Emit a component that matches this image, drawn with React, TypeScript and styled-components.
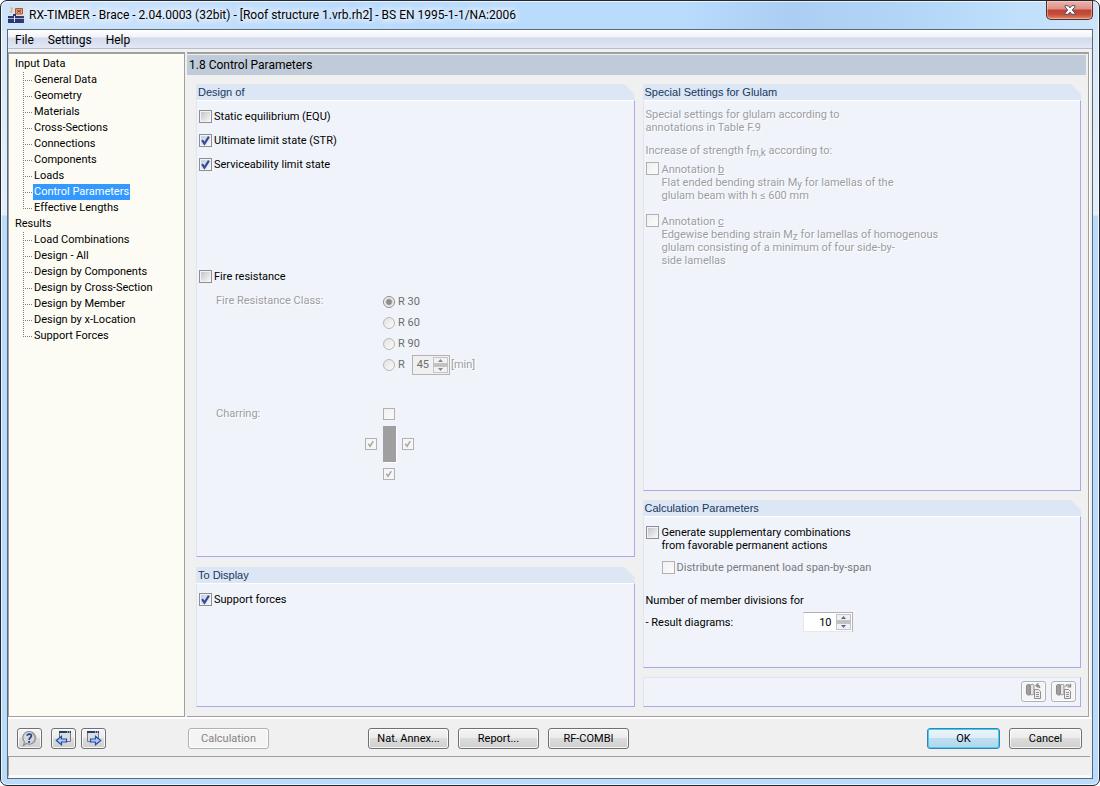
import React from 'react';
import styled, { createGlobalStyle, css } from 'styled-components';

const UI_FONT = 'Roboto, Tahoma, sans-serif';

const GlobalStyle = createGlobalStyle`
  * { box-sizing: border-box; }
  body { margin: 0; background: #fff; }
  button, input { font: inherit; color: inherit; margin: 0; }
`;

/* ---------- window frame ---------- */

const Window = styled.div`
  display: flex;
  flex-direction: column;
  min-height: 100vh;
  padding: 0 6px 6px;
  border: 1px solid #23272e;
  border-radius: 7px;
  background:
    linear-gradient(90deg, #cfe4fa 0, #cfe4fa 3%, #b9dbfc 30%, #b9dbfc 62%, #abcef2 72%, #b4d7f8 84%, #bfdffb 92%, #cde4fa 100%) top / 100% 29px no-repeat,
    linear-gradient(#d6e8fa 0, #e4effa 214px, #b9dbfc 215px, #b9dbfc 100%);
  box-shadow: inset 0 0 0 1px rgba(255, 255, 255, 0.7);
  font: 11px/13px ${UI_FONT};
  color: #000;
`;

const TitleBar = styled.header`
  display: flex;
  align-items: flex-start;
  height: 28px;
`;

const Title = styled.h1`
  flex: 1;
  margin: 0;
  padding: 6px 0 0 5px;
  font-size: 12px;
  line-height: 16px;
  font-weight: 400;
  white-space: nowrap;
  text-shadow: 0 0 6px #fff, 0 0 10px #fff, 0 0 12px #fff;
`;

const AppIcon = styled.svg`
  width: 16px;
  height: 16px;
  margin: 6px 0 0 1px;
`;

const CloseButton = styled.button`
  display: flex;
  align-items: center;
  justify-content: center;
  width: 47px;
  height: 19px;
  padding: 0;
  border: 1px solid #5b2a2a;
  border-top: 0;
  border-radius: 0 0 5px 5px;
  background: linear-gradient(#eeb3ac 0, #dc8f86 45%, #bd4231 50%, #c5503a 75%, #dc8a68 100%);
  box-shadow: inset 0 0 0 1px rgba(255, 225, 215, 0.45);
`;

const Client = styled.div`
  flex: 1;
  display: flex;
  flex-direction: column;
  border: 1px solid #5c6a78;
  background: #f0f0f0;
`;

const MenuBar = styled.nav`
  display: flex;
  gap: 14px;
  height: 19px;
  margin-bottom: 3px;
  padding-left: 7px;
  border-bottom: 1px solid #b6bccc;
  background: linear-gradient(#fff 0, #f1f3f9 7px, #d3daec 8px, #e3e8f5 100%);
`;

const MenuItem = styled.button`
  padding: 1px 0 0;
  border: 0;
  background: none;
  font-size: 12px;
  line-height: 18px;
`;

/* ---------- body ---------- */

const Body = styled.div`
  flex: 1;
  display: grid;
  grid-template-columns: 177px minmax(0, 1fr);
  column-gap: 2px;
  border-bottom: 2px solid #fff;
`;

const Sidebar = styled.nav`
  padding: 2px 0 0 6px;
  border: 1px solid #a0a0a0;
  border-top: 2px solid #a0a0a0;
  background: #fcfcf4;
  box-shadow: inset 0 1px 0 #fff;
`;

const TreeList = styled.ul`
  margin: 0;
  padding: 0;
  list-style: none;
  line-height: 16px;
  white-space: nowrap;
`;

const SubList = styled(TreeList)`
  padding-left: 8px;
`;

const TreeRow = styled.li`
  display: flex;
  height: 16px;
`;

const Branch = styled.span<{ $last: boolean }>`
  width: 10px;
  height: 16px;
  background: linear-gradient(90deg, #808080 1px, transparent 1px) 0 8px / 2px 1px repeat-x;

  &::before {
    content: '';
    display: block;
    width: 1px;
    height: ${(p) => (p.$last ? '8px' : '16px')};
    background: linear-gradient(#808080 1px, transparent 1px) 0 0 / 1px 2px;
  }
`;

const TreeLink = styled.a<{ $active?: boolean }>`
  padding: 0 1px;
  color: ${(p) => (p.$active ? '#fff' : '#000')};
  background: ${(p) => (p.$active ? '#3399ff' : 'transparent')};
  text-decoration: none;
`;

const Content = styled.main`
  display: flex;
  flex-direction: column;
  margin-right: 3px;
  border: 1px solid #a0a0a0;
  border-top-width: 2px;
  border-left: 0;
  padding: 1px 2px 9px 0;
  box-shadow: 1px 0 0 #fff;
`;

const PageTitle = styled.h2`
  margin: 0;
  padding-left: 2px;
  background: #bfcbd8;
  font-size: 12px;
  line-height: 20px;
  font-weight: 400;
`;

const Columns = styled.div`
  flex: 1;
  display: grid;
  grid-template-columns: repeat(2, minmax(0, 1fr));
  column-gap: 8px;
  padding: 9px 5px 0 9px;
`;

const Column = styled.div<{ $gap: number }>`
  display: flex;
  flex-direction: column;
  gap: ${(p) => p.$gap}px;
`;

/* ---------- panels ---------- */

const PanelBox = styled.section<{ $grow?: boolean; $height?: number }>`
  display: flex;
  flex-direction: column;
  flex: ${(p) => (p.$grow ? '1' : '0 0 auto')};
  min-height: ${(p) => p.$height ?? 0}px;
`;

const PanelTitle = styled.h3`
  height: 16px;
  margin: 0;
  padding-left: 2px;
  background: #dce6f5;
  clip-path: polygon(0 0, calc(100% - 10px) 0, 100% 10px, 100% 100%, 0 100%);
  font: 400 11px/16px "Liberation Sans", Arial, sans-serif;
  color: #17375e;
`;

const PanelBody = styled.div<{ $titled?: boolean }>`
  flex: 1;
  border: 1px solid #a8a8ee;
  border-left-color: #dbe5f6;
  border-top: 1px solid ${(p) => (p.$titled ? '#fff' : '#dbe5f6')};
  background: #f0f4fa;
  padding: 0 4px 0 2px;
`;

/* ---------- controls ---------- */

const disabledText = css`
  color: #9c9da3;
  text-shadow: 1px 1px 0 #fff;
`;

const Tick = styled.input.attrs({ type: 'checkbox' })<{ $size?: number }>`
  appearance: none;
  flex: none;
  width: ${(p) => p.$size ?? 13}px;
  height: ${(p) => p.$size ?? 13}px;
  border: 1px solid #8e8f8f;
  background: linear-gradient(135deg, #c2c5ca, #f6f6f6) content-box #f4f4f4;
  padding: 1px;

  &:checked {
    background:
      url("data:image/svg+xml,%3Csvg xmlns='http://www.w3.org/2000/svg' viewBox='0 0 11 11'%3E%3Cpath d='M2.6 5.2 4.6 8.2 8.4 2.2' fill='none' stroke='%2334489c' stroke-width='1.8'/%3E%3C/svg%3E") center / 100% 100% no-repeat border-box,
      linear-gradient(135deg, #c9cdd8, #f6f6f6) content-box #f4f4f4;
  }

  &:disabled {
    border-color: #b1b1b1;
    background: linear-gradient(135deg, #f0f0f0, #fbfbfb);
  }

  &:disabled:checked {
    background:
      url("data:image/svg+xml,%3Csvg xmlns='http://www.w3.org/2000/svg' viewBox='0 0 11 11'%3E%3Cpath d='M2.5 5.2 4.5 8 8 2.4' fill='none' stroke='%23acacac' stroke-width='1.8'/%3E%3C/svg%3E") center / 100% 100% no-repeat,
      #f6f6f6;
  }
`;

const CheckRow = styled.label<{ $top?: number; $indent?: number }>`
  display: flex;
  align-items: center;
  gap: 2px;
  height: 24px;
  margin-top: ${(p) => p.$top ?? 0}px;
  margin-left: ${(p) => p.$indent ?? 0}px;
`;

const CheckList = styled.div`
  padding-top: 3px;
`;

const OptionGroup = styled.fieldset<{ $top: number }>`
  display: grid;
  grid-template-columns: 167px 1fr;
  margin: ${(p) => p.$top}px 0 0;
  padding: 0 0 0 17px;
  border: 0;
`;

const GroupName = styled.span<{ $row: number }>`
  line-height: ${(p) => p.$row}px;
  ${disabledText}
`;

const RadioRow = styled.div`
  display: flex;
  align-items: center;
  height: 21px;
  color: #6d6d6d;
`;

const RadioLabel = styled.label`
  display: flex;
  align-items: center;
  gap: 3px;
`;

const Radio = styled.input.attrs({ type: 'radio' })`
  appearance: none;
  width: 12px;
  height: 12px;
  border: 1px solid #b8b8b8;
  border-radius: 50%;
  background: linear-gradient(135deg, #e2e2e2, #fbfbfb);

  &:checked {
    border-color: #8c8c8c;
    background: radial-gradient(circle, #8f8f8f 0, #8a8a8a 2px, #b4b4b4 3px, #f2f2f2 4px);
  }
`;

const Spinner = styled.span<{ $wide?: boolean; $off?: boolean }>`
  display: flex;
  width: ${(p) => (p.$wide ? 50 : 38)}px;
  height: 20px;
  padding: 1px;
  border: 1px solid #b2b2b2;
  background: ${(p) => (p.$off ? '#f0f0f0' : '#fff')};
  ${(p) => p.$wide && 'border-left-color: #e3e9ef; border-bottom-color: #e3e9ef;'}
`;

const SpinField = styled.input`
  flex: 1;
  min-width: 0;
  padding: 0 4px 0 0;
  border: 0;
  background: none;
  text-align: right;

  &:disabled { color: #6d6d6d; }
`;

const SpinButtons = styled.span`
  display: grid;
  grid-template-rows: 1fr 1fr;
  width: 15px;
  row-gap: 2px;
  background: #c0c0c0;
`;

const SpinButton = styled.button`
  display: flex;
  align-items: center;
  justify-content: center;
  padding: 0;
  border: 1px solid #c4c4c4;
  background: #f1f1f3;
  color: #5b6497;

  &:disabled { color: #8a8a8a; }
`;

const MinuteRow = styled(RadioRow)`
  ${RadioLabel} { width: 29px; }
`;

const Unit = styled.span`
  padding-left: 1px;
  ${disabledText}
`;

const Charring = styled.div`
  display: grid;
  grid-template-columns: 12px 13px 12px;
  grid-template-rows: 12px 36px 12px;
  grid-template-areas: '. top .' 'left bar right' '. bottom .';
  gap: 6px;
  align-items: center;
  margin-left: -18px;
`;

const CharTick = styled(Tick)<{ $side: string }>`
  grid-area: ${(p) => p.$side};
`;

const Beam = styled.span`
  grid-area: bar;
  height: 36px;
  background: #9f9f9f;
  box-shadow: 1px 1px 0 #fff;
`;

const Note = styled.p<{ $top: number }>`
  margin: ${(p) => p.$top}px 0 0;
  ${disabledText}
`;

const Annotation = styled.label<{ $top: number }>`
  display: grid;
  grid-template-columns: 13px 1fr;
  column-gap: 3px;
  margin-top: ${(p) => p.$top}px;
  ${disabledText}
`;

const AnnotationText = styled.span`
  padding-top: 1px;
`;

const Sub = styled.sub`
  font-size: 10px;
  line-height: 0;
  vertical-align: -2px;
`;

const Multiline = styled.label`
  display: flex;
  align-items: flex-start;
  gap: 3px;
  padding-top: 9px;
`;

const SubCheck = styled(CheckRow)`
  color: #77797f;
`;

const Line = styled.p<{ $top: number }>`
  margin: ${(p) => p.$top}px 0 0;
`;

const FieldRow = styled.div`
  display: grid;
  grid-template-columns: 157px auto;
  align-items: center;
  margin-top: 5px;
`;

const ToolRow = styled.div`
  display: flex;
  justify-content: flex-end;
  gap: 5px;
  padding-top: 3px;
`;

/* ---------- footer ---------- */

const Button = styled.button<{ $width?: number; $primary?: boolean }>`
  display: flex;
  align-items: center;
  justify-content: center;
  width: ${(p) => p.$width ?? 81}px;
  height: 21px;
  padding: 0;
  border: 1px solid #707070;
  border-radius: 3px;
  background: linear-gradient(#f4f4f4 0, #ebebeb 49%, #dcdcdc 50%, #cfcfcf 100%);
  box-shadow: inset 0 0 0 1px rgba(255, 255, 255, 0.8);

  ${(p) => p.$primary && css`
    border-color: #3c7fb1;
    background: linear-gradient(#ecf5fb 0, #dbedf8 49%, #c0def0 50%, #b3d6ec 100%);
    box-shadow: inset 0 0 0 1px #3fd0f8;
  `}

  &:disabled {
    border-color: #adb2b5;
    background: #f4f4f4;
    color: #838383;
  }
`;

const Footer = styled.footer`
  display: grid;
  grid-template-columns: 171px 180px 1fr auto;
  align-items: center;
  padding: 9px 10px 7px 9px;
`;

const ButtonGroup = styled.div<{ $gap: number }>`
  display: flex;
  gap: ${(p) => p.$gap}px;
`;

const HelpButton = styled(Button)`
  margin-right: 4px;
`;

const StatusBar = styled.div`
  height: 22px;
  margin-right: 2px;
  border-top: 1px solid #a0a0a0;
  border-left: 1px solid #a0a0a0;
  border-bottom: 3px solid #fafafa;
`;

/* ---------- icons ---------- */

const HelpIcon = () => (
  <svg width="17" height="17" viewBox="0 0 17 17" aria-hidden="true">
    <path d="M8.5 1.500a6.300 6.300 0 1 1-3 11.900L2.500 15.500 3.500 12A6.300 6.300 0 0 1 8.500 1.500Z" fill="#d5d8de" stroke="#858992" strokeWidth="1.100" />
    <path d="M10.500 2.500a6 6 0 0 1 1 10.500" fill="none" stroke="#9a9da5" strokeWidth="1.400" />
    <path d="M6.200 5.800C6.200 3.600 10.400 3.400 10.400 5.800 10.400 7.600 8.300 7.600 8.100 9.800" fill="none" stroke="#2c4480" strokeWidth="1.800" />
    <path d="M7.100 11h2v1.800h-2z" fill="#2c4480" />
  </svg>
);

const PageIcon = ({ forward }: { forward?: boolean }) => (
  <svg width="17" height="17" viewBox="0 0 17 17" aria-hidden="true">
    <g transform={forward ? 'translate(-1 0)' : 'translate(1 0)'}>
      <path d="M3.500 1.500h11v10h-11z" fill="#dcdde0" stroke="#777a82" />
      <path d="M3 1h12v2H3z" fill="#2b3d70" />
      <path d="M11 1.500h1v1h-1zM13 1.500h1v1h-1z" fill="#fff" />
    </g>
    <path
      d={forward ? 'M5.500 9h5V6.200l5.200 4.300-5.200 4.300V12h-5z' : 'M11.500 9h-5V6.200l-5.200 4.300 5.200 4.300V12h5z'}
      fill="#a9d2f7"
      stroke="#2a4aa3"
      strokeWidth="1.200"
    />
  </svg>
);

const LibraryIcon = ({ load }: { load?: boolean }) => (
  <svg width="17" height="17" viewBox="0 0 17 17" aria-hidden="true">
    <path d="M1.500 2.500v8.500c.8 1 2.300 1.200 3.500.8V1.800C3.800 1.200 2.300 1.500 1.500 2.500Z" fill="#a0a0a0" stroke="#8a8a8a" />
    <path d="M5.500 1.800c1.500-.6 2.800-.4 3.500.5v8.500c-.8.900-2 1.200-3.500.9z" fill="#e6e6e6" stroke="#8f8f8f" />
    <path d="M9.500 6.500h4l2 2v7h-6z" fill="#eee" stroke="#8f8f8f" />
    <path d="M11 9.500h3M11 11.500h3M11 13.500h3" stroke="#8f8f8f" />
    <path
      d={load ? 'M10.500 3.500c1-1.800 2.500-2 4-.8M15.500.800v3h-3' : 'M14.500 5c.4-2-.5-2.700-2.500-2.700M13.500.400l-2.500 2 2.500 2.200'}
      fill="none"
      stroke="#8a8a8a"
      strokeWidth="1.300"
    />
  </svg>
);

const Arrow = ({ down }: { down?: boolean }) => (
  <svg width="5" height="3" viewBox="0 0 5 3" aria-hidden="true">
    <path d={down ? 'M0 0h5L2.500 3z' : 'M0 3h5L2.500 0z'} fill="currentColor" />
  </svg>
);

const Spin = ({ id, value, wide, off, label }: { id: string; value: string; wide?: boolean; off?: boolean; label?: string }) => (
  <Spinner $wide={wide} $off={off}>
    <SpinField id={id} defaultValue={value} disabled={off} aria-label={label} />
    <SpinButtons>
      <SpinButton disabled={off} aria-label="Increase"><Arrow /></SpinButton>
      <SpinButton disabled={off} aria-label="Decrease"><Arrow down /></SpinButton>
    </SpinButtons>
  </Spinner>
);

const Panel = ({ title, grow, height, children }: { title?: string; grow?: boolean; height?: number; children: React.ReactNode }) => (
  <PanelBox $grow={grow} $height={height}>
    {title && <PanelTitle>{title}</PanelTitle>}
    <PanelBody $titled={!!title}>{children}</PanelBody>
  </PanelBox>
);

const TREE = [
  {
    name: 'Input Data',
    items: ['General Data', 'Geometry', 'Materials', 'Cross-Sections', 'Connections', 'Components', 'Loads', 'Control Parameters', 'Effective Lengths'],
  },
  {
    name: 'Results',
    items: ['Load Combinations', 'Design - All', 'Design by Components', 'Design by Cross-Section', 'Design by Member', 'Design by x-Location', 'Support Forces'],
  },
];

const CLASSES = ['R 30', 'R 60', 'R 90'];

export default function App() {
  return (
    <>
      <GlobalStyle />
      <Window>
        <TitleBar>
          <AppIcon viewBox="0 0 16 16" aria-hidden="true">
            <path d="M6.500 0H16v9H6.500z" fill="#f3dcc8" />
            <path d="M7.500 1.500h7v5.500h-7z" fill="#d9a27e" stroke="#a3564a" />
            <path d="M9 3l4 2.500M13 3L9 5.500" stroke="#7a4040" />
            <path d="M2 1h2v2L2.500 5H4.500" fill="none" stroke="#e8ae62" strokeWidth="1.200" />
            <path d="M0 9h5V7h3v2h8v7H0z" fill="#2b3870" />
            <path d="M0 11.500h16" stroke="#a9b4d4" />
            <path d="M6.500 9v6" stroke="#dfe6f5" />
          </AppIcon>
          <Title>RX-TIMBER - Brace - 2.04.0003 (32bit) - [Roof structure 1.vrb.rh2] - BS EN 1995-1-1/NA:2006</Title>
          <CloseButton aria-label="Close">
            <svg width="12" height="10" viewBox="0 0 12 10" aria-hidden="true">
              <path d="M1 .7h3.200L6 2.900 7.800.7H11v1.100L8.300 5 11 8.200v1.100H7.800L6 7.100 4.200 9.300H1V8.200L3.700 5 1 1.800z" fill="#fff" stroke="#4b5366" />
            </svg>
          </CloseButton>
        </TitleBar>

        <Client>
          <MenuBar>
            <MenuItem>File</MenuItem>
            <MenuItem>Settings</MenuItem>
            <MenuItem>Help</MenuItem>
          </MenuBar>

          <Body>
            <Sidebar>
              <TreeList>
                {TREE.map((group) => (
                  <li key={group.name}>
                    {group.name}
                    <SubList>
                      {group.items.map((item, i) => (
                        <TreeRow key={item}>
                          <Branch $last={i === group.items.length - 1} />
                          <TreeLink href="#" $active={item === 'Control Parameters'}>{item}</TreeLink>
                        </TreeRow>
                      ))}
                    </SubList>
                  </li>
                ))}
              </TreeList>
            </Sidebar>

            <Content>
              <PageTitle>1.8 Control Parameters</PageTitle>
              <Columns>
                <Column $gap={10}>
                  <Panel title="Design of" grow>
                    <CheckList>
                      <CheckRow><Tick />Static equilibrium (EQU)</CheckRow>
                      <CheckRow><Tick defaultChecked />Ultimate limit state (STR)</CheckRow>
                      <CheckRow><Tick defaultChecked />Serviceability limit state</CheckRow>
                      <CheckRow $top={88}><Tick />Fire resistance</CheckRow>
                    </CheckList>
                    <OptionGroup $top={3} disabled aria-label="Fire Resistance Class">
                      <GroupName $row={20}>Fire Resistance Class:</GroupName>
                      <div>
                        {CLASSES.map((name, i) => (
                          <RadioRow key={name}>
                            <RadioLabel><Radio name="fire" defaultChecked={i === 0} />{name}</RadioLabel>
                          </RadioRow>
                        ))}
                        <MinuteRow>
                          <RadioLabel><Radio name="fire" />R</RadioLabel>
                          <Spin id="minutes" value="45" off label="Minutes" />
                          <Unit>[min]</Unit>
                        </MinuteRow>
                      </div>
                    </OptionGroup>
                    <OptionGroup $top={33} disabled aria-label="Charring">
                      <GroupName $row={12}>Charring:</GroupName>
                      <Charring>
                        <CharTick $side="top" $size={12} aria-label="Top" />
                        <CharTick $side="left" $size={12} defaultChecked aria-label="Left" />
                        <Beam />
                        <CharTick $side="right" $size={12} defaultChecked aria-label="Right" />
                        <CharTick $side="bottom" $size={12} defaultChecked aria-label="Bottom" />
                      </Charring>
                    </OptionGroup>
                  </Panel>
                  <Panel title="To Display" height={140}>
                    <CheckList>
                      <CheckRow><Tick defaultChecked />Support forces</CheckRow>
                    </CheckList>
                  </Panel>
                </Column>

                <Column $gap={9}>
                  <Panel title="Special Settings for Glulam" grow>
                    <Note $top={7}>
                      Special settings for glulam according to
                      <br />
                      annotations in Table F.9
                    </Note>
                    <Note $top={10}>Increase of strength f<Sub>m,k</Sub> according to:</Note>
                    <Annotation $top={5}>
                      <Tick disabled />
                      <AnnotationText>
                        Annotation <u>b</u>
                        <br />
                        Flat ended bending strain M<Sub>y</Sub> for lamellas of the
                        <br />
                        glulam beam with h ≤ 600 mm
                      </AnnotationText>
                    </Annotation>
                    <Annotation $top={12}>
                      <Tick disabled />
                      <AnnotationText>
                        Annotation <u>c</u>
                        <br />
                        Edgewise bending strain M<Sub>z</Sub> for lamellas of homogenous
                        <br />
                        glulam consisting of a minimum of four side-by-
                        <br />
                        side lamellas
                      </AnnotationText>
                    </Annotation>
                  </Panel>
                  <Panel title="Calculation Parameters" height={168}>
                    <Multiline>
                      <Tick />
                      <span>
                        Generate supplementary combinations
                        <br />
                        from favorable permanent actions
                      </span>
                    </Multiline>
                    <SubCheck $top={3} $indent={16}><Tick disabled />Distribute permanent load span-by-span</SubCheck>
                    <Line $top={15}>Number of member divisions for</Line>
                    <FieldRow>
                      <label htmlFor="divisions">- Result diagrams:</label>
                      <Spin id="divisions" value="10" wide />
                    </FieldRow>
                  </Panel>
                  <Panel height={30}>
                    <ToolRow>
                      <Button disabled $width={25} aria-label="Save to library"><LibraryIcon /></Button>
                      <Button disabled $width={25} aria-label="Load from library"><LibraryIcon load /></Button>
                    </ToolRow>
                  </Panel>
                </Column>
              </Columns>
            </Content>
          </Body>

          <Footer>
            <ButtonGroup $gap={5}>
              <HelpButton $width={25} aria-label="Help"><HelpIcon /></HelpButton>
              <Button $width={25} aria-label="Previous page"><PageIcon /></Button>
              <Button $width={25} aria-label="Next page"><PageIcon forward /></Button>
            </ButtonGroup>
            <Button disabled>Calculation</Button>
            <ButtonGroup $gap={9}>
              <Button>Nat. Annex...</Button>
              <Button>Report...</Button>
              <Button>RF-COMBI</Button>
            </ButtonGroup>
            <ButtonGroup $gap={9}>
              <Button $width={73} $primary>OK</Button>
              <Button $width={73}>Cancel</Button>
            </ButtonGroup>
          </Footer>
          <StatusBar role="status" />
        </Client>
      </Window>
    </>
  );
}
